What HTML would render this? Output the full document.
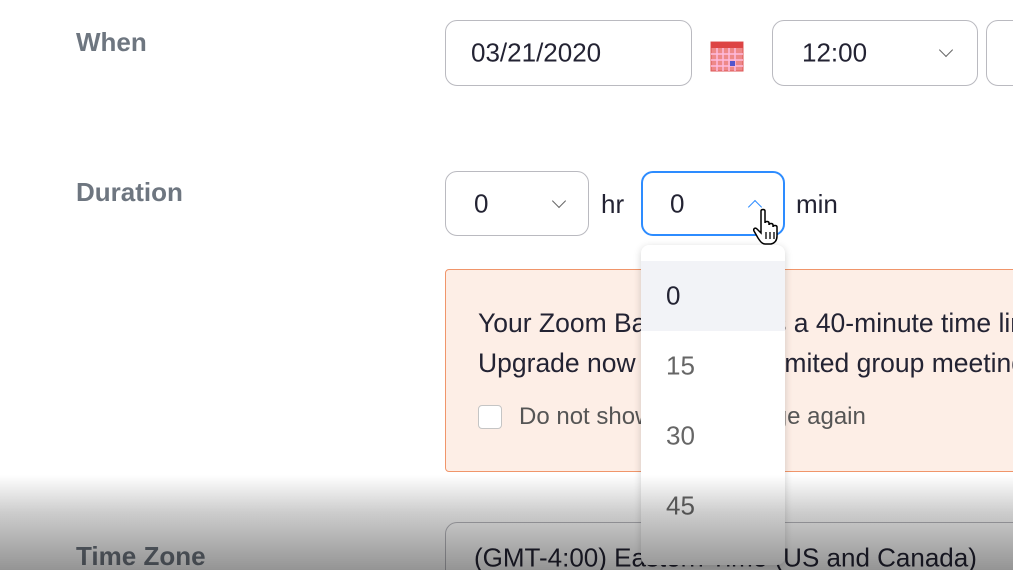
<!DOCTYPE html>
<html><head><meta charset="utf-8"><style>
html,body{margin:0;padding:0;width:1013px;height:570px;overflow:hidden;}
body{position:relative;background:#fff;font-family:"Liberation Sans",sans-serif;color:#232333;}
.abs{position:absolute;white-space:nowrap;}
.lbl{font-size:26px;font-weight:bold;color:#6e7680;}
.box{position:absolute;border:1.5px solid #babac0;border-radius:12px;box-sizing:border-box;background:#fff;font-size:26px;color:#232333;white-space:nowrap;overflow:hidden;}
.box span{position:absolute;top:50%;transform:translateY(-50%);}
.chev{position:absolute;width:9px;height:9px;border-right:1.8px solid #666;border-bottom:1.8px solid #666;transform:rotate(45deg);}
.warn{left:445px;top:269px;width:600px;height:203px;background:#fdeee6;border:1.5px solid #f0956a;border-radius:4px;box-sizing:border-box;}
.wt{font-size:26.5px;color:#232333;}
.dd{left:641px;top:245px;width:144px;height:320px;background:#fff;border-radius:8px;box-shadow:0 2px 8px rgba(0,0,0,.18);}
.dd div{position:absolute;left:0;width:144px;height:70px;font-size:26px;}
.dd span{position:absolute;left:25px;top:50%;transform:translateY(-50%);}
.shade{left:0;top:475px;width:1013px;height:95px;background:linear-gradient(to bottom,rgba(0,0,0,0),rgba(0,0,0,0.2) 40%,rgba(0,0,0,0.42));z-index:10;}
</style></head><body>
<div class="abs lbl" style="left:76px;top:27px;">When</div>
<div class="abs lbl" style="left:76px;top:177px;">Duration</div>
<div class="abs lbl" style="left:76px;top:541px;">Time Zone</div>

<div class="box" style="left:445px;top:20px;width:247px;height:66px;"><span style="left:25px;">03/21/2020</span></div>
<svg class="abs" style="left:710px;top:40px" width="34" height="32" viewBox="0 0 34 32">
<rect x="1" y="2" width="32" height="29" fill="#e88" stroke="#d55" />
<rect x="1" y="2" width="32" height="6" fill="#d44"/>
<g stroke="#fbd" stroke-width="1.5">
<line x1="1" y1="14" x2="33" y2="14"/><line x1="1" y1="20" x2="33" y2="20"/><line x1="1" y1="26" x2="33" y2="26"/>
<line x1="7" y1="8" x2="7" y2="31"/><line x1="13" y1="8" x2="13" y2="31"/><line x1="19" y1="8" x2="19" y2="31"/><line x1="25" y1="8" x2="25" y2="31"/></g>
<rect x="20" y="21" width="5" height="5" fill="#55c"/>
</svg>
<div class="box" style="left:772px;top:20px;width:206px;height:66px;"><span style="left:29px;">12:00</span><div class="chev" style="left:168px;top:24px;"></div></div>
<div class="box" style="left:986px;top:20px;width:60px;height:66px;"></div>

<div class="box" style="left:445px;top:171px;width:144px;height:65px;"><span style="left:28px;">0</span><div class="chev" style="left:108px;top:24px;"></div></div>
<div class="abs" style="left:601px;top:189px;font-size:26px;">hr</div>
<div class="box" style="left:641px;top:171px;width:144px;height:65px;border:2px solid #2d8cff;"><span style="left:27px;">0</span><div class="chev" style="left:107px;top:29px;transform:rotate(225deg);border-color:#2d8cff;"></div></div>
<div class="abs" style="left:796px;top:189px;font-size:26px;">min</div>

<div class="abs warn"></div>
<div class="abs wt" style="left:478px;top:308px;">Your Zoom Basic plan has a 40-minute time limit</div>
<div class="abs wt" style="left:478px;top:348px;">Upgrade now to enjoy unlimited group meetings</div>
<div class="abs" style="left:478px;top:405px;width:22px;height:22px;border:1.5px solid #c5c5c5;border-radius:4px;background:#fff;"></div>
<div class="abs" style="left:519px;top:403px;font-size:24px;color:#555;">Do not show this message again</div>

<div class="box" style="left:445px;top:522px;width:600px;height:70px;"><span style="left:28px;top:35px;">(GMT-4:00) Eastern Time (US and Canada)</span></div>

<div class="abs dd">
<div style="top:16px;background:#f2f3f7;"><span style="color:#232333;">0</span></div>
<div style="top:86px;"><span style="color:#666;">15</span></div>
<div style="top:156px;"><span style="color:#666;">30</span></div>
<div style="top:226px;"><span style="color:#666;">45</span></div>
</div>

<svg class="abs" style="left:753px;top:208px" width="30" height="38" viewBox="0 0 30 38">
<path d="M8 3c0-2 4-2 4 0v12c0-2 4-2 4 0v2c0-2 4-2 4 0v2c0-2 4-2 4 0v9c0 4-2 7-6 8h-6c-3 0-5-3-7-6l-4-7c-1-2 1-4 3-2l4 4V3z" fill="#fff" stroke="#000" stroke-width="1.5"/>
<path d="M13 24v7M17 24v7M21 24v7" stroke="#000" stroke-width="1.3"/>
</svg>

<div class="abs shade"></div>
</body></html>
